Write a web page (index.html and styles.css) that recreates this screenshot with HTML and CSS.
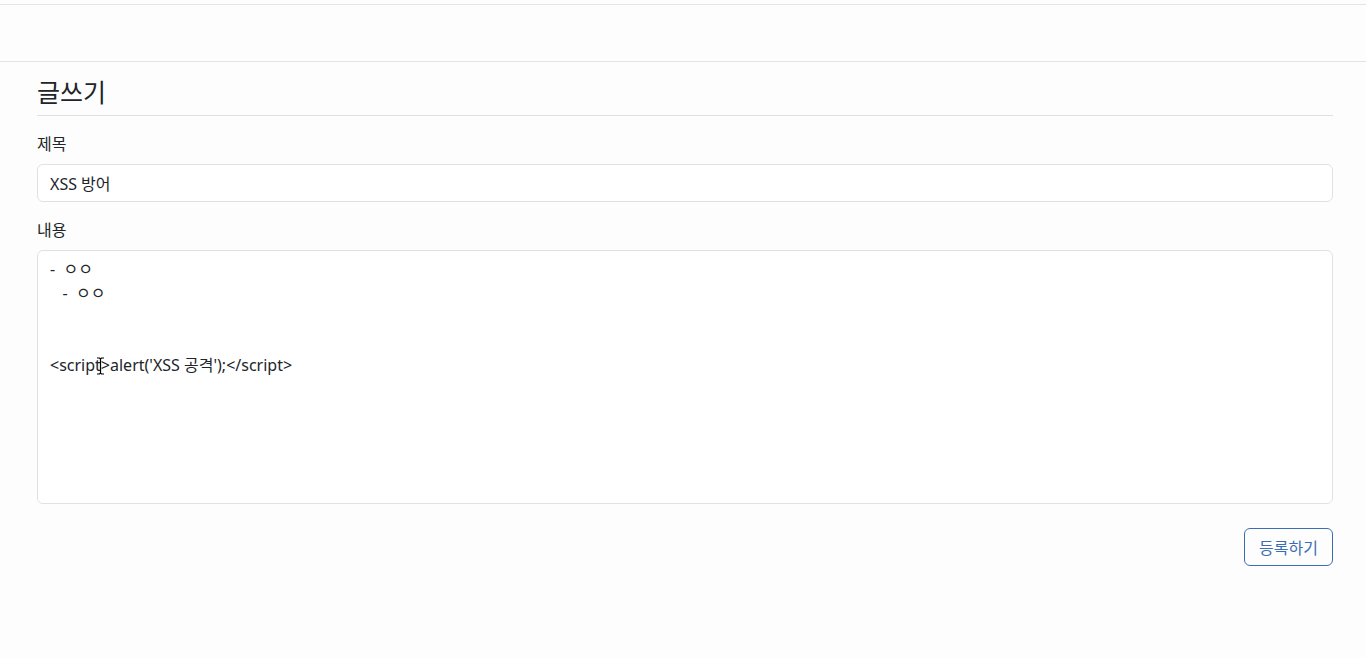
FILE: index.html
```html
<!DOCTYPE html>
<html lang="ko">
<head>
  <meta charset="UTF-8" />
  <meta name="viewport" content="width=device-width, initial-scale=1.0"/>
  <title>글쓰기</title>
  <link rel="stylesheet" href="styles.css">
</head>
<body>
  <div class="topbar"></div>
  <nav class="navbar"></nav>

  <main class="container">
    <h4 class="page-title">글쓰기</h4>
    <form class="write-form">
      <div class="field">
        <label for="title">제목</label>
        <input type="text" id="title" value="XSS 방어" />
      </div>
      <div class="field">
        <label for="content">내용</label>
        <div class="textarea-wrap">
          <textarea id="content">-  ㅇㅇ
   -  ㅇㅇ


&lt;script&gt;alert('XSS 공격');&lt;/script&gt;</textarea>
          <svg class="ibeam" width="9" height="18" viewBox="0 0 9 18">
            <path d="M1 1h2.5L4.5 2L5.5 1H8M4.5 2v14M1 17h2.5L4.5 16L5.5 17H8" fill="none" stroke="#000" stroke-width="1.2"/>
          </svg>
        </div>
      </div>
      <div class="actions">
        <button type="button" class="btn-outline">등록하기</button>
      </div>
    </form>
  </main>
</body>
</html>
```

FILE: styles.css
```css
body {
  margin: 0;
  font-family: "Noto Sans", "Noto Sans CJK KR", sans-serif;
  font-size: 16px;
  color: #212529;
  background: #fdfdfd;
}
.topbar {
  height: 4px;
  border-bottom: 1px solid #e4e4e4;
}
.navbar {
  height: 56px;
  border-bottom: 1px solid #e4e4e4;
}
.container {
  width: 1296px;
  margin-left: 37px;
}
.page-title {
  margin: 16px 0 0;
  padding-bottom: 8px;
  font-size: 25px;
  font-weight: 400;
  line-height: 29px;
  border-bottom: 1px solid #dee2e6;
}
.field {
  margin-top: 16px;
}
.field label {
  display: block;
  line-height: 24px;
  margin-bottom: 8px;
}
input[type="text"], textarea {
  display: block;
  box-sizing: border-box;
  width: 100%;
  font-family: inherit;
  font-size: 16px;
  line-height: 24px;
  color: #212529;
  background: #fff;
  border: 1px solid #dee2e6;
  border-radius: 6px;
  padding: 6px 12px;
  outline: none;
}
input[type="text"] {
  height: 38px;
}
.textarea-wrap {
  position: relative;
}
textarea {
  height: 254px;
  resize: none;
  white-space: pre-wrap;
}
.ibeam {
  position: absolute;
  left: 59px;
  top: 107px;
}
.actions {
  display: flex;
  justify-content: flex-end;
  margin-top: 24px;
}
.btn-outline {
  height: 38px;
  padding: 0 14px;
  font-family: inherit;
  font-size: 16px;
  color: #3a6db3;
  background: transparent;
  border: 1px solid #3a6db3;
  border-radius: 6px;
  cursor: pointer;
}
```
